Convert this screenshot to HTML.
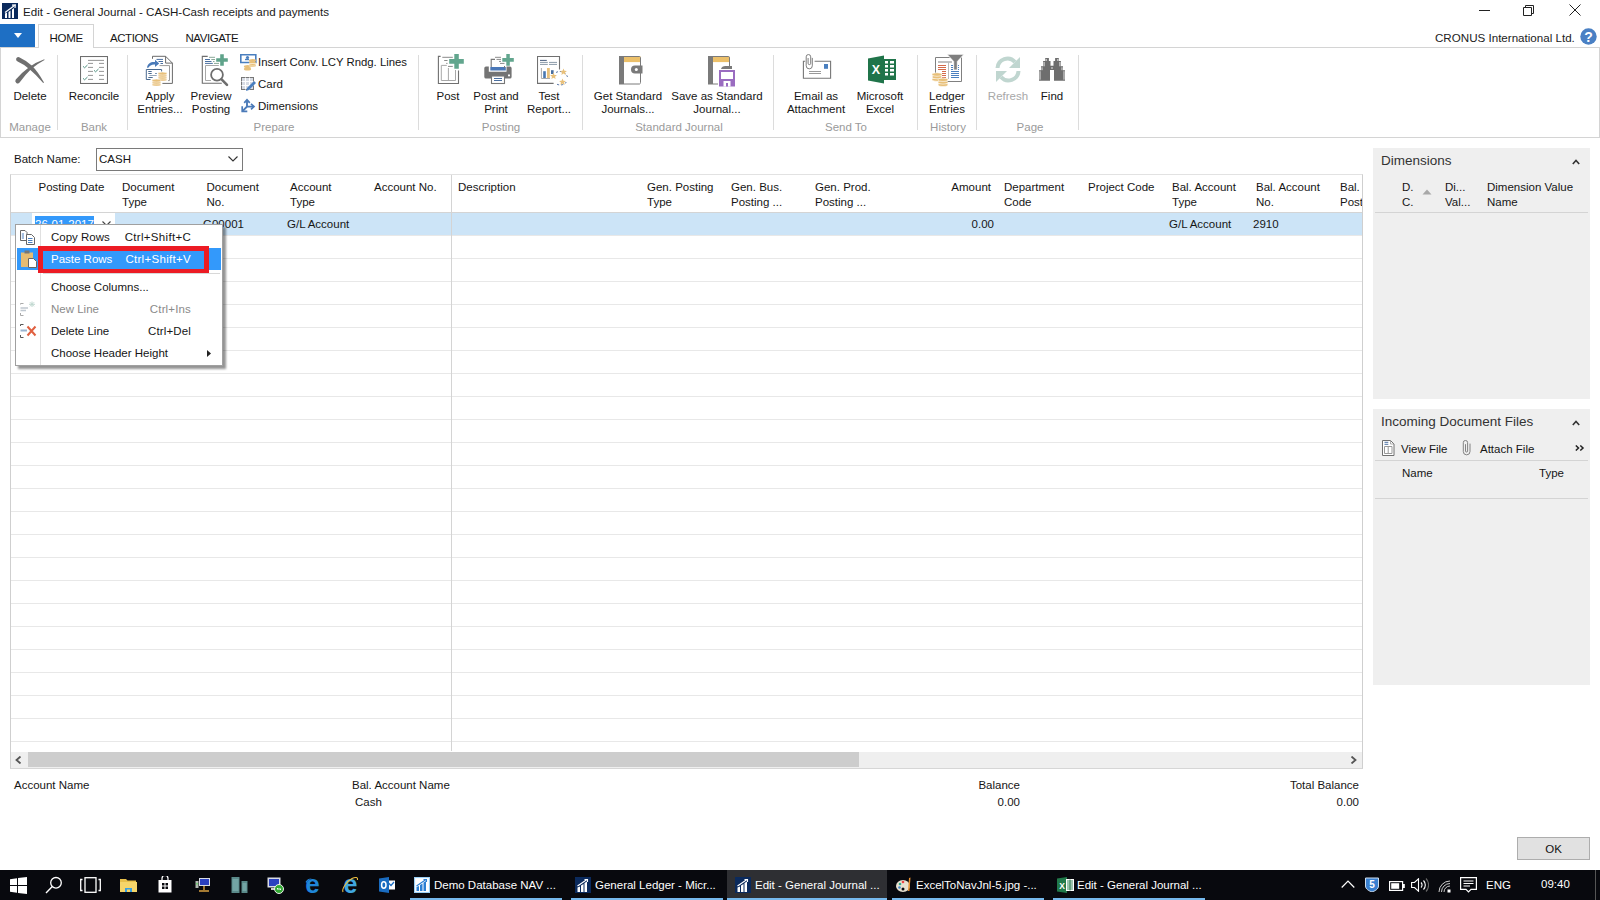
<!DOCTYPE html>
<html><head><meta charset="utf-8">
<style>
*{margin:0;padding:0;box-sizing:border-box}
html,body{width:1600px;height:900px;overflow:hidden;background:#fff}
body{position:relative;font-family:"Liberation Sans",sans-serif;font-size:11.5px;color:#161616}
.a{position:absolute}
.t{position:absolute;white-space:nowrap;line-height:14px;font-size:11.5px}
.c{transform:translateX(-50%);text-align:center}
.r{transform:translateX(-100%);text-align:right}
.g{color:#9a9a9a}
.sep{position:absolute;width:1px;background:#dcdcdc}
.hl{position:absolute;height:1px;background:#e8e8e8}
</style></head><body>

<!-- ===== Title bar ===== -->
<svg class="a" style="left:2px;top:3px" width="16" height="16" viewBox="0 0 16 16">
<rect width="16" height="16" fill="#0b2a5c"/>
<path d="M3 15V10.5L5 9.5V15ZM6.5 15V9L8.5 7.5V15ZM10 15V6.5L12 5V15Z" fill="#fff"/>
<path d="M3 9.5L12.5 2.5" stroke="#fff" stroke-width="1.2"/><path d="M10 2.2L13.3 2L13 5" stroke="#fff" stroke-width="1.2" fill="none"/>
</svg>
<div class="t" style="left:23px;top:5px;font-size:11.6px;color:#1a1a1a">Edit - General Journal - CASH-Cash receipts and payments</div>
<!-- window controls -->
<div class="a" style="left:1479px;top:10px;width:11px;height:1px;background:#222"></div>
<svg class="a" style="left:1523px;top:5px" width="11" height="11" viewBox="0 0 11 11"><path d="M0.5 2.5H8.5V10.5H0.5Z M2.5 2.5V0.5H10.5V8.5H8.5" fill="none" stroke="#222"/></svg>
<svg class="a" style="left:1569px;top:4px" width="12" height="12" viewBox="0 0 12 12"><path d="M0.5 0.5L11.5 11.5M11.5 0.5L0.5 11.5" stroke="#222" stroke-width="1"/></svg>

<!-- ===== Ribbon tabs ===== -->
<div class="a" style="left:0;top:24px;width:35px;height:23px;background:#1e6fc4"></div>
<svg class="a" style="left:14px;top:33px" width="8" height="5" viewBox="0 0 8 5"><path d="M0 0H8L4 5Z" fill="#fff"/></svg>
<div class="a" style="left:38px;top:24px;width:56px;height:24px;border:1px solid #d4d4d4;border-bottom:none;background:#fff;z-index:2"></div>
<div class="t" style="left:49.5px;top:31px;font-size:11.5px;z-index:3;letter-spacing:-0.25px">HOME</div>
<div class="t" style="left:110px;top:31px;font-size:11.5px;letter-spacing:-0.45px">ACTIONS</div>
<div class="t" style="left:185.5px;top:31px;font-size:11.5px;letter-spacing:-0.45px">NAVIGATE</div>
<div class="t" style="left:1435px;top:31px;font-size:11.6px;color:#222">CRONUS International Ltd.</div>
<svg class="a" style="left:1580px;top:28px" width="17" height="17" viewBox="0 0 17 17"><circle cx="8.5" cy="8.5" r="8.2" fill="#4a80c4"/><text x="8.5" y="13.5" font-family="Liberation Sans" font-weight="bold" font-size="14" fill="#fff" text-anchor="middle">?</text></svg>

<!-- ===== Ribbon body ===== -->
<div class="a" style="left:0;top:47px;width:1600px;height:91px;border-top:1px solid #d4d4d4;border-bottom:1px solid #d4d4d4;border-left:1px solid #d4d4d4;border-right:1px solid #d4d4d4"></div>

<div id="ribbon">
<!-- Delete -->
<svg class="a" style="left:14px;top:55px" width="32" height="30" viewBox="0 0 32 30">
<path d="M5.2 2.2Q12 5.3 18 10.8Q24 16.8 30 27.6L29.2 27.9Q22 19.6 15.5 14.2Q9.5 9.2 3.6 6.6A2.3 2.3 0 0 1 5.2 2.2Z" fill="#6f6f6f"/>
<path d="M1.8 24.6Q8 17.2 15 12.2Q22 7.2 30.3 4.3L30.5 5Q23 9 17.2 14Q11.2 19.8 5.6 27.4A2.3 2.3 0 0 1 1.8 24.6Z" fill="#6f6f6f"/>
</svg>
<div class="t c" style="left:30px;top:89px">Delete</div>
<div class="t c g" style="left:30px;top:120px">Manage</div>
<div class="sep" style="left:57px;top:55px;height:75px"></div>
<!-- Reconcile -->
<svg class="a" style="left:80px;top:56px" width="28" height="28" viewBox="0 0 28 28">
<rect x="0.5" y="0.5" width="27" height="27" fill="#fff" stroke="#6e6e6e" stroke-width="1.1"/>
<g stroke="#8a8a8a" stroke-width="0.9"><path d="M8 4.4H24M8 7.4H13M19 7.4H24M8 11.4H13M19 11.4H24M8 15.4H13M19 15.4H24M8 19.4H13M19 19.4H24M8 23.4H13M19 23.4H24"/></g>
<g stroke="#4f9080" stroke-width="1" fill="none"><path d="M3 10.3L4.6 11.8L7.5 9M3 22.3L4.6 23.8L7.5 21M14 14.3L15.6 15.8L18.5 13"/></g>
</svg>
<div class="t c" style="left:94px;top:89px">Reconcile</div>
<div class="t c g" style="left:94px;top:120px">Bank</div>
<div class="sep" style="left:127px;top:55px;height:75px"></div>
<!-- Apply Entries -->
<svg class="a" style="left:142px;top:52px" width="34" height="36" viewBox="0 0 34 36">
<path d="M10.5 6.8V4.3H23.6L30.4 11.1V31.4H20.4" fill="#fff" stroke="#6a6a6a"/>
<path d="M23.6 4.3V11.1H30.4" fill="none" stroke="#6a6a6a"/>
<path d="M14.5 7.4H21M16.5 9.5H21M18.5 11.5H21" stroke="#4a6fa0"/>
<path d="M17.5 13.6H27.5V28.6H26" fill="none" stroke="#9a9a9a"/>
<path d="M5 15.8C5.5 11.5 9 9.5 13 10V7.8L17.2 11.5L13 15V12.6C10 12.3 7.5 13.6 6.3 15.8Z" fill="#4a7ab8"/>
<path d="M19.6 19.5V17.5H4.3V27.5H8.5" fill="#fff" stroke="#4a6a90"/>
<path d="M6.3 19.5H9.7M6.3 21.5H9.7M13.3 21.5H14.7M6.3 25.5H10.7" stroke="#4a6a90"/><path d="M7.3 23.5H14.7" stroke="#9ab"/>
<g fill="#e8c07a" stroke="#fff" stroke-width="0.5"><ellipse cx="20.5" cy="27.8" rx="4.6" ry="1.3"/><ellipse cx="20.5" cy="25.8" rx="4.6" ry="1.3"/><ellipse cx="20.5" cy="23.8" rx="4.6" ry="1.3"/><ellipse cx="20.5" cy="21.6" rx="4.6" ry="1.5"/>
<ellipse cx="14.5" cy="32.8" rx="4.6" ry="1.3"/><ellipse cx="14.5" cy="30.8" rx="4.6" ry="1.3"/><ellipse cx="14.5" cy="28.6" rx="4.6" ry="1.5"/></g>
</svg>
<div class="t c" style="left:160px;top:89px">Apply</div>
<div class="t c" style="left:160px;top:102px">Entries...</div>
<!-- Preview Posting -->
<svg class="a" style="left:201px;top:53px" width="29" height="34" viewBox="0 0 29 34">
<path d="M6.7 3.4H1.3V30.3H20.8" fill="none" stroke="#6e6e6e" stroke-width="1.1"/>
<path d="M8 4.3H14M10.3 6.5H14M12 8.5H13.5M13 10.4H18" stroke="#8aa898"/>
<path d="M4 6.5H9M4 8.5H10.5M4 10.4H11.8" stroke="#4a6fa0"/>
<path d="M17.8 12.5H4.5V27.5H10" fill="none" stroke="#a8a8a8"/>
<path d="M19.2 1.2H22.8V5.2H26.8V8.8H22.8V12.8H19.2V8.8H15.2V5.2H19.2Z" fill="#5fa38a"/>
<circle cx="16" cy="21.7" r="5.9" fill="#fff" fill-opacity="0.6" stroke="#6e6e6e" stroke-width="1.8"/>
<path d="M20.6 26.3L26 31.8" stroke="#6e6e6e" stroke-width="2.6" stroke-linecap="round"/>
</svg>
<div class="t c" style="left:211px;top:89px">Preview</div>
<div class="t c" style="left:211px;top:102px">Posting</div>
<!-- small items -->
<svg class="a" style="left:240px;top:54px" width="17" height="17" viewBox="0 0 17 17">
<path d="M0.8 0.8H15.8V8.5H0.8Z" fill="#fff" stroke="#4a7fbf" stroke-width="1.6"/>
<circle cx="7.5" cy="3.5" r="1.6" fill="#4a7fbf"/><path d="M5 5.5H9" stroke="#4a7fbf" stroke-width="1.4"/>
<ellipse cx="12.5" cy="6.5" rx="3.6" ry="1.5" fill="#e8c07a"/><ellipse cx="12.5" cy="9" rx="3.6" ry="1.5" fill="#e8c07a"/><ellipse cx="12.5" cy="11.5" rx="3.6" ry="1.5" fill="#e8c07a"/>
<ellipse cx="7.5" cy="12.5" rx="3.6" ry="1.5" fill="#e8c07a"/><ellipse cx="7.5" cy="15" rx="3.6" ry="1.5" fill="#e8c07a"/>
<path d="M9 9.5H16M9 12H16" stroke="#fff" stroke-width="0.6"/>
</svg>
<div class="t" style="left:258px;top:55px;font-size:11.35px">Insert Conv. LCY Rndg. Lines</div>
<svg class="a" style="left:241px;top:77px" width="16" height="16" viewBox="0 0 16 16">
<rect x="0.5" y="0.5" width="12" height="12" fill="#d8dce4" stroke="#777"/>
<path d="M0.5 4.5H12.5M0.5 8.5H12.5M4.5 0.5V12.5M8.5 0.5V12.5" stroke="#fff"/>
<path d="M5 14L6 11L13 4L15 6L8 13Z" fill="#4a7fbf"/>
</svg>
<div class="t" style="left:258px;top:77px">Card</div>
<svg class="a" style="left:241px;top:98px" width="15" height="15" viewBox="0 0 15 15">
<path d="M6 8.6V2.2M6 8.6H12M6.6 8L2 12.6" stroke="#4a7ab8" stroke-width="1.9" fill="none"/>
<path d="M3.2 4.8L6 1.8L8.8 4.8M10 5.8L13 8.6L10 11.4M1.2 8.3V13.4H6.3" stroke="#4a7ab8" stroke-width="1.7" fill="none"/>
</svg>
<div class="t" style="left:258px;top:99px">Dimensions</div>
<div class="t c g" style="left:274px;top:120px">Prepare</div>
<div class="sep" style="left:418px;top:55px;height:75px"></div>
<!-- Post -->
<svg class="a" style="left:437px;top:54px" width="28" height="31" viewBox="0 0 28 31">
<path d="M3.6 2.4H1.4V29.5H21.5V16.5" fill="none" stroke="#707070" stroke-width="1.1"/>
<path d="M9.8 11.4H4.3V26.5H18.5V16M11.4 14V26.5" fill="none" stroke="#a8a8a8"/>
<path d="M5.3 3.3H15.8M7.2 6.5H10.5M9.2 9.4H10.5M11 12.4H15.8" stroke="#8a8a8a"/>
<path d="M17.3 0.1H21.8V5H26.8V9.8H21.8V14.8H17.3V9.8H12.2V5H17.3Z" fill="#62a68e"/>
</svg>
<div class="t c" style="left:448px;top:89px">Post</div>
<!-- Post and Print -->
<svg class="a" style="left:484px;top:54px" width="31" height="31" viewBox="0 0 31 31">
<path d="M2 12.4H4.8V17.8H22.5V12.4H26A1.8 1.8 0 0 1 27.6 14V23A1.6 1.6 0 0 1 26 24.5H2A1.7 1.7 0 0 1 0.3 23V14A1.7 1.7 0 0 1 2 12.4Z" fill="#747474"/>
<rect x="6.3" y="13" width="15.5" height="3.5" fill="#4a78b8"/>
<path d="M7.2 13V5.4H11" fill="none" stroke="#777" stroke-width="1.1"/>
<path d="M11 3.3H17M12.5 5.4H17M15 7.4H17M16 9.4H20.5" stroke="#8a8a8a"/>
<path d="M20.5 12V14" stroke="#777"/>
<rect x="7.5" y="22" width="13" height="7.5" fill="#fff" stroke="#777" stroke-width="1.1"/>
<path d="M10 24.5H18M10 26.5H18" stroke="#4a6fa0"/>
<rect x="24" y="20.5" width="2" height="1.8" fill="#fff"/>
<path d="M22.3 0.1H25.8V4.1H29.8V7.8H25.8V11.8H22.3V7.8H18.3V4.1H22.3Z" fill="#62a68e"/>
</svg>
<div class="t c" style="left:496px;top:89px">Post and</div>
<div class="t c" style="left:496px;top:102px">Print</div>
<!-- Test Report -->
<svg class="a" style="left:537px;top:56px" width="31" height="31" viewBox="0 0 31 31">
<path d="M22.5 13.5V0.5H0.5V27.4H16.6" fill="#fff" stroke="#707070" stroke-width="1.1"/>
<path d="M3 4.4H9.8" stroke="#4a6080"/>
<path d="M3 6.4H10.8M12 6.4H20M3 8.4H10.8M12 8.4H20" stroke="#8a9aa8"/>
<path d="M4.4 12V22.5H13" fill="none" stroke="#aaa"/>
<rect x="6.2" y="15.2" width="2.6" height="6.8" fill="#4a78b0"/><rect x="10" y="12" width="2.8" height="10" fill="#e8c07a"/><rect x="14" y="14.2" width="2.6" height="3.8" fill="#4a6fa0"/>
<path d="M19 16.5A8 8 0 0 1 30.5 21M29.5 26A8 8 0 0 1 19.5 28" fill="none" stroke="#5a78a8" stroke-dasharray="2.2 1.8"/>
<path d="M26.50 12.40L27.45 14.69L29.92 14.89L28.04 16.50L28.62 18.91L26.50 17.62L24.38 18.91L24.96 16.50L23.08 14.89L25.55 14.69Z" fill="#e8c07a"/><path d="M16.50 16.60L17.45 18.89L19.92 19.09L18.04 20.70L18.62 23.11L16.50 21.82L14.38 23.11L14.96 20.70L13.08 19.09L15.55 18.89Z" fill="#e8c07a"/><path d="M25.50 22.40L26.45 24.69L28.92 24.89L27.04 26.50L27.62 28.91L25.50 27.62L23.38 28.91L23.96 26.50L22.08 24.89L24.55 24.69Z" fill="#e8c07a"/>
</svg>
<div class="t c" style="left:549px;top:89px">Test</div>
<div class="t c" style="left:549px;top:102px">Report...</div>
<div class="t c g" style="left:501px;top:120px">Posting</div>
<div class="sep" style="left:582px;top:55px;height:75px"></div>
<!-- Get Standard Journals -->
<svg class="a" style="left:619px;top:56px" width="25" height="29" viewBox="0 0 25 29">
<path d="M0 0H20.5A1.5 1.5 0 0 1 22 1.5V27A1.5 1.5 0 0 1 20.5 28.5H0Z" fill="#fff"/>
<rect x="0" y="0" width="5" height="28.5" fill="#7a7a7a"/>
<rect x="5" y="0.3" width="16.5" height="5.8" fill="#ecc06a"/>
<path d="M5 28H20.5A1.5 1.5 0 0 0 21.5 26.5V1.5A1.5 1.5 0 0 0 20.5 0.5H5" fill="none" stroke="#7a7a7a"/>
<path d="M16 9.5H23.5V17.5H16A4 4 0 0 1 16 9.5Z" fill="#7a7a7a"/><circle cx="17.3" cy="13.5" r="1.5" fill="#fff"/>
</svg>
<div class="t c" style="left:628px;top:89px">Get Standard</div>
<div class="t c" style="left:628px;top:102px">Journals...</div>
<!-- Save as Standard Journal -->
<svg class="a" style="left:708px;top:56px" width="28" height="31" viewBox="0 0 28 31">
<path d="M0 0H20.5A1.5 1.5 0 0 1 22 1.5V27.5A1.5 1.5 0 0 1 20.5 28.5H0Z" fill="#fff"/>
<rect x="0" y="0" width="5" height="28.5" fill="#7a7a7a"/>
<rect x="5" y="0.3" width="16.5" height="5.8" fill="#ecc06a"/>
<path d="M5 28H10M5 0.5H20.5A1.5 1.5 0 0 1 21.5 2V10" fill="none" stroke="#7a7a7a"/>
<path d="M13 13C13.5 11 15 10 17.5 10H24V13Z" fill="#7a7a7a"/>
<path d="M11 14H27V30.5H11Z" fill="#9a6cc0"/>
<rect x="13" y="16" width="12" height="7" fill="#fff"/><rect x="15.5" y="25" width="7" height="5.5" fill="#fff"/><rect x="18" y="27" width="2" height="3.5" fill="#9a6cc0"/>
</svg>
<div class="t c" style="left:717px;top:89px">Save as Standard</div>
<div class="t c" style="left:717px;top:102px">Journal...</div>
<div class="t c g" style="left:679px;top:120px">Standard Journal</div>
<div class="sep" style="left:773px;top:55px;height:75px"></div>
<!-- Email as attachment -->
<svg class="a" style="left:802px;top:54px" width="30" height="26" viewBox="0 0 30 26">
<path d="M3.2 7.3H1.4V24.3H28.6V7.3H12.6" fill="#fff" stroke="#777" stroke-width="1.1"/>
<path d="M6.1 4V9.3A1.3 1.3 0 0 0 8.7 9.3V2.8A2.25 2.25 0 0 0 4.2 2.8V11.8A3.05 3.05 0 0 0 10.3 11.8V3.9" fill="none" stroke="#777" stroke-width="0.95"/>
<path d="M7 17.5H19M7 19.5H19" stroke="#999"/>
<rect x="22" y="10" width="4" height="4.8" fill="#4a7fbf"/>
</svg>
<div class="t c" style="left:816px;top:89px">Email as</div>
<div class="t c" style="left:816px;top:102px">Attachment</div>
<!-- Excel -->
<svg class="a" style="left:868px;top:55px" width="29" height="29" viewBox="0 0 29 29">
<path d="M0 3.5L16 0.5V28.5L0 25.5Z" fill="#20744a"/>
<rect x="15" y="4" width="13" height="21" fill="#20744a"/>
<g fill="#fff"><rect x="17" y="6" width="3" height="2.5"/><rect x="22" y="6" width="4" height="2.5"/><rect x="17" y="10" width="3" height="2.5"/><rect x="22" y="10" width="4" height="2.5"/><rect x="17" y="14" width="3" height="2.5"/><rect x="22" y="14" width="4" height="2.5"/><rect x="17" y="18" width="3" height="2.5"/><rect x="22" y="18" width="4" height="2.5"/></g>
<text x="7.8" y="19.3" font-family="Liberation Sans" font-weight="bold" font-size="12.5" fill="#fff" text-anchor="middle">X</text>
</svg>
<div class="t c" style="left:880px;top:89px">Microsoft</div>
<div class="t c" style="left:880px;top:102px">Excel</div>
<div class="t c g" style="left:846px;top:120px">Send To</div>
<div class="sep" style="left:917px;top:55px;height:75px"></div>
<!-- Ledger entries -->
<svg class="a" style="left:931px;top:54px" width="34" height="33" viewBox="0 0 34 33">
<path d="M4.5 3.5H30.5V27.5H16" fill="#fff" stroke="#808080"/><path d="M4.5 3.5V19" stroke="#808080"/>
<path d="M7 8H21" stroke="#a8a8a8" stroke-width="1.4"/><path d="M17.5 8V25" stroke="#bbb"/>
<path d="M7 11.5H15M7 13.5H15M7 15.5H15M11 17.5H15M11 19.5H15M11 21.5H15M11 23.5H15" stroke="#d46a4a"/>
<path d="M20 17.5H28M20 19.5H28M20 21.5H28M20 23.5H28M20 11.5H22M27 11.5H28M20 13.5H22M27 13.5H28M20 15.5H22M27 15.5H28" stroke="#4a7fbf"/>
<path d="M16 0.3H33L26.3 7.5V16H22.7V7.5Z" fill="#7f7f7f" stroke="#fff" stroke-width="0.8"/>
<g fill="#e8c07a" stroke="#fff" stroke-width="0.6"><ellipse cx="6" cy="25.5" rx="5" ry="1.8"/><ellipse cx="6" cy="23" rx="5" ry="1.8"/><ellipse cx="6" cy="20.5" rx="5" ry="1.8"/>
<ellipse cx="12" cy="30.8" rx="5" ry="1.8"/><ellipse cx="12" cy="28.3" rx="5" ry="1.8"/><ellipse cx="12" cy="25.8" rx="5" ry="1.8"/></g>
</svg>
<div class="t c" style="left:947px;top:89px">Ledger</div>
<div class="t c" style="left:947px;top:102px">Entries</div>
<div class="t c g" style="left:948px;top:120px">History</div>
<div class="sep" style="left:976px;top:55px;height:75px"></div>
<!-- Refresh -->
<svg class="a" style="left:994px;top:56px" width="28" height="27" viewBox="0 0 28 27">
<path d="M3.5 12A10 10 0 0 1 21 6" fill="none" stroke="#c0d6d0" stroke-width="4"/>
<path d="M26 1V12H15Z" fill="#c0d6d0"/>
<path d="M24.5 15A10 10 0 0 1 7 21" fill="none" stroke="#c0d6d0" stroke-width="4"/>
<path d="M2 26V15H13Z" fill="#c0d6d0"/>
</svg>
<div class="t c g" style="left:1008px;top:89px;color:#a8a8a8">Refresh</div>
<!-- Find -->
<svg class="a" style="left:1039px;top:58px" width="27" height="23" viewBox="0 0 27 23">
<path d="M0 12.2H2V8.3H4.1V3H6.2V0H9.9V3H11.5V7.7H14.5V3H16.1V0H19.8V3H21.9V8.3H24V12.2H26V22.7H15V12H11V22.7H0Z" fill="#6e6e6e"/>
<path d="M1 13.2V21.7M3 9.3V12.2M5.1 4V8.3M7.2 1V3M25 13.2V21.7M23 9.3V12.2M20.9 4V8.3M18.8 1V3M12 10H14" stroke="#fff" stroke-width="0.8"/>
</svg>
<div class="t c" style="left:1052px;top:89px">Find</div>
<div class="t c g" style="left:1030px;top:120px">Page</div>
<div class="sep" style="left:1078px;top:55px;height:75px"></div>
</div>

<!-- ===== Batch name ===== -->
<div class="t" style="left:14px;top:152px">Batch Name:</div>
<div class="a" style="left:96px;top:148px;width:147px;height:23px;border:1px solid #7a7a7a;background:#fff"></div>
<div class="t" style="left:99px;top:152px">CASH</div>
<svg class="a" style="left:228px;top:156px" width="10" height="6" viewBox="0 0 10 6"><path d="M0.5 0.5L5 5L9.5 0.5" fill="none" stroke="#333" stroke-width="1.1"/></svg>

<div id="grid">
<!-- grid frame -->
<div class="a" style="left:10px;top:174px;width:1353px;height:595px;border:1px solid #cfcfcf;border-top-color:#e2e2e2;border-bottom-color:#d6d6d6"></div>
<div class="a" style="left:11px;top:212px;width:1351px;height:1px;background:#d4d4d4"></div>
<div class="a" style="left:11px;top:213px;width:1351px;height:22px;background:#cce4f7"></div>
<div class="hl" style="left:11px;top:235px;width:1351px"></div>
<div class="hl" style="left:11px;top:258px;width:1351px"></div>
<div class="hl" style="left:11px;top:281px;width:1351px"></div>
<div class="hl" style="left:11px;top:304px;width:1351px"></div>
<div class="hl" style="left:11px;top:327px;width:1351px"></div>
<div class="hl" style="left:11px;top:350px;width:1351px"></div>
<div class="hl" style="left:11px;top:373px;width:1351px"></div>
<div class="hl" style="left:11px;top:396px;width:1351px"></div>
<div class="hl" style="left:11px;top:419px;width:1351px"></div>
<div class="hl" style="left:11px;top:442px;width:1351px"></div>
<div class="hl" style="left:11px;top:465px;width:1351px"></div>
<div class="hl" style="left:11px;top:488px;width:1351px"></div>
<div class="hl" style="left:11px;top:511px;width:1351px"></div>
<div class="hl" style="left:11px;top:534px;width:1351px"></div>
<div class="hl" style="left:11px;top:557px;width:1351px"></div>
<div class="hl" style="left:11px;top:580px;width:1351px"></div>
<div class="hl" style="left:11px;top:603px;width:1351px"></div>
<div class="hl" style="left:11px;top:626px;width:1351px"></div>
<div class="hl" style="left:11px;top:649px;width:1351px"></div>
<div class="hl" style="left:11px;top:672px;width:1351px"></div>
<div class="hl" style="left:11px;top:695px;width:1351px"></div>
<div class="hl" style="left:11px;top:718px;width:1351px"></div>
<div class="hl" style="left:11px;top:741px;width:1351px"></div>

<div class="a" style="left:451px;top:175px;width:1px;height:576px;background:#d4d4d4"></div>
<!-- header -->
<div class="a" style="left:11px;top:175px;width:1351px;height:37px;overflow:hidden">
<div class="t" style="left:27.5px;top:5px;line-height:15px">Posting Date</div>
<div class="t" style="left:111px;top:5px;line-height:15px">Document<br>Type</div>
<div class="t" style="left:195.5px;top:5px;line-height:15px">Document<br>No.</div>
<div class="t" style="left:279px;top:5px;line-height:15px">Account<br>Type</div>
<div class="t" style="left:363px;top:5px;line-height:15px">Account No.</div>
<div class="t" style="left:447px;top:5px;line-height:15px">Description</div>
<div class="t" style="left:636px;top:5px;line-height:15px">Gen. Posting<br>Type</div>
<div class="t" style="left:720px;top:5px;line-height:15px">Gen. Bus.<br>Posting ...</div>
<div class="t" style="left:804px;top:5px;line-height:15px">Gen. Prod.<br>Posting ...</div>
<div class="t r" style="left:980px;top:5px;line-height:15px">Amount</div>
<div class="t" style="left:993px;top:5px;line-height:15px">Department<br>Code</div>
<div class="t" style="left:1077px;top:5px;line-height:15px">Project Code</div>
<div class="t" style="left:1161px;top:5px;line-height:15px">Bal. Account<br>Type</div>
<div class="t" style="left:1245px;top:5px;line-height:15px">Bal. Account<br>No.</div>
<div class="t" style="left:1329px;top:5px;line-height:15px">Bal.<br>Posting</div>
</div>
<!-- row 1 -->
<div class="a" style="left:32px;top:213px;width:83px;height:22px;background:#fff"></div>
<div class="a" style="left:35px;top:216px;width:59px;height:17px;background:#3399fb"></div>
<div class="t" style="left:35px;top:217px;color:#fff">26-01-2017</div>
<svg class="a" style="left:102px;top:221px" width="9" height="5" viewBox="0 0 9 5"><path d="M0.5 0.5L4.5 4.5L8.5 0.5" fill="none" stroke="#444" stroke-width="1.1"/></svg>
<div class="t" style="left:203px;top:217px">G00001</div>
<div class="t" style="left:287px;top:217px">G/L Account</div>
<div class="t r" style="left:994px;top:217px">0.00</div>
<div class="t" style="left:1169px;top:217px">G/L Account</div>
<div class="t" style="left:1253px;top:217px">2910</div>
<!-- scrollbar -->
<div class="a" style="left:11px;top:752px;width:1351px;height:16px;background:#efefef"></div>
<div class="a" style="left:28px;top:752px;width:831px;height:15px;background:#cdcdcd"></div>
<svg class="a" style="left:15px;top:756px" width="7" height="8" viewBox="0 0 7 8"><path d="M5.5 0.5L1.5 4L5.5 7.5" fill="none" stroke="#555" stroke-width="1.8"/></svg>
<svg class="a" style="left:1350px;top:756px" width="7" height="8" viewBox="0 0 7 8"><path d="M1.5 0.5L5.5 4L1.5 7.5" fill="none" stroke="#555" stroke-width="1.8"/></svg>
</div>
<div id="factbox">
<div class="a" style="left:1373px;top:148px;width:217px;height:251px;background:#efefef"></div>
<div class="t" style="left:1381px;top:154px;font-size:13.5px;color:#333">Dimensions</div>
<svg class="a" style="left:1572px;top:159px" width="8" height="6" viewBox="0 0 8 6"><path d="M0.8 5L4 1.5L7.2 5" fill="none" stroke="#333" stroke-width="1.6"/></svg>
<div class="t" style="left:1402px;top:180px;line-height:15px">D.<br>C.</div>
<svg class="a" style="left:1422px;top:189px" width="10" height="6" viewBox="0 0 10 6"><path d="M0.5 5.5L5 0.5L9.5 5.5Z" fill="#a8a8a8"/></svg>
<div class="t" style="left:1445px;top:180px;line-height:15px">Di...<br>Val...</div>
<div class="t" style="left:1487px;top:180px;line-height:15px">Dimension Value<br>Name</div>
<div class="a" style="left:1375px;top:212px;width:213px;height:1px;background:#d4d4d4"></div>

<div class="a" style="left:1373px;top:409px;width:217px;height:276px;background:#efefef"></div>
<div class="t" style="left:1381px;top:415px;font-size:13.5px;color:#333">Incoming Document Files</div>
<svg class="a" style="left:1572px;top:420px" width="8" height="6" viewBox="0 0 8 6"><path d="M0.8 5L4 1.5L7.2 5" fill="none" stroke="#333" stroke-width="1.6"/></svg>
<svg class="a" style="left:1382px;top:440px" width="13" height="16" viewBox="0 0 13 16"><path d="M0.5 0.5H8.5L12 4V15.5H0.5Z" fill="#fff" stroke="#707070"/><path d="M8.5 0.5V4H12" fill="none" stroke="#999" stroke-width="0.8"/><path d="M2.5 2.3H6.3M2.5 4.3H6.3" stroke="#4a6fa0"/><path d="M2.5 6.5H10V13.5H2.5ZM6.2 6.5V13.5" fill="none" stroke="#999"/></svg>
<div class="t" style="left:1401px;top:442px">View File</div>
<svg class="a" style="left:1462px;top:440px" width="9" height="16" viewBox="0 0 9 16"><path d="M3.5 4.2V11A1.05 1.05 0 0 0 5.6 11V2.6A2.15 2.15 0 0 0 1.3 2.6V11.5A3.35 3.35 0 0 0 8 11.5V3.6" fill="none" stroke="#777" stroke-width="0.9"/></svg>
<div class="t" style="left:1480px;top:442px">Attach File</div>
<svg class="a" style="left:1575px;top:445px" width="10" height="6" viewBox="0 0 10 6"><path d="M0.8 0.5L3.5 3L0.8 5.5M5.3 0.5L8 3L5.3 5.5" fill="none" stroke="#222" stroke-width="1.5"/></svg>
<div class="a" style="left:1375px;top:460px;width:213px;height:1px;background:#d4d4d4"></div>
<div class="t" style="left:1402px;top:466px">Name</div>
<div class="t" style="left:1539px;top:466px">Type</div>
<div class="a" style="left:1375px;top:498px;width:213px;height:1px;background:#d4d4d4"></div>
</div>
<div id="footer">
<div class="t" style="left:14px;top:778px">Account Name</div>
<div class="t" style="left:352px;top:778px">Bal. Account Name</div>
<div class="t" style="left:355px;top:795px">Cash</div>
<div class="t r" style="left:1020px;top:778px">Balance</div>
<div class="t r" style="left:1020px;top:795px">0.00</div>
<div class="t r" style="left:1359px;top:778px">Total Balance</div>
<div class="t r" style="left:1359px;top:795px">0.00</div>
<div class="a" style="left:1517px;top:837px;width:73px;height:23px;background:#e1e1e1;border:1px solid #adadad"></div>
<div class="t c" style="left:1553.5px;top:842px;color:#111">OK</div>
</div>
<div id="menu">
<div class="a" style="left:18px;top:227px;width:208px;height:142px;background:rgba(0,0,0,0.42);filter:blur(1px)"></div>
<div class="a" style="left:15px;top:224px;width:208px;height:142px;background:#fff;border:1px solid #a0a0a0"></div>
<div class="a" style="left:40px;top:225px;width:1px;height:140px;background:#e0e0e0"></div>
<!-- highlight -->
<div class="a" style="left:17px;top:248px;width:204px;height:22px;background:#3399fb"></div>
<div class="a" style="left:40px;top:248px;width:1px;height:22px;background:#3399fb"></div>
<div class="a" style="left:38px;top:246px;width:171px;height:27px;border:5px solid #ec1b24;border-bottom-width:4px"></div>
<div class="a" style="left:43px;top:273px;width:177px;height:1px;background:#d8d8d8"></div>
<!-- copy icon -->
<svg class="a" style="left:20px;top:230px" width="16" height="15" viewBox="0 0 16 15"><path d="M0.5 0.5H5L7 2.5V10.5H0.5Z" fill="#fff" stroke="#666"/><path d="M1.8 4H4M1.8 6H4M1.8 8H4" stroke="#4a7fbf"/><path d="M6.5 4.5H11.5L14.5 7.5V14.5H6.5Z" fill="#fff" stroke="#666"/><path d="M8 8.5H12.5M8 10.5H12.5M8 12.5H12.5" stroke="#4a7fbf"/></svg>
<!-- paste icon -->
<svg class="a" style="left:21px;top:250px" width="16" height="18" viewBox="0 0 16 18"><rect x="0" y="2.5" width="12" height="14.5" fill="#e6bc72"/><rect x="3.5" y="0.5" width="5" height="3" fill="#777"/><path d="M7.5 8.5H12.5L15.5 11.5V17.5H7.5Z" fill="#fff" stroke="#666"/></svg>
<!-- new line icon -->
<svg class="a" style="left:20px;top:301px" width="16" height="15" viewBox="0 0 16 15"><path d="M3.5 2.5H0.5V3.5M0.5 12V14.5H3.5" fill="none" stroke="#aaa"/><path d="M0.5 7H8M0.5 9.5H6" stroke="#c0c8d0" stroke-width="1.5"/><path d="M12 0.5V6M9 3.3H15M10 1.3L14 5.3M14 1.3L10 5.3" stroke="#c0d8d0"/></svg>
<!-- delete line icon -->
<svg class="a" style="left:20px;top:324px" width="17" height="14" viewBox="0 0 17 14"><path d="M3.5 0.5H0.5V2M0.5 11V13.5H3.5" fill="none" stroke="#555"/><path d="M0.5 6.5H7" stroke="#9ab4d0" stroke-width="2"/><path d="M7.5 2.5L15.5 11.5M15.5 2.5L7.5 11.5" stroke="#e06040" stroke-width="2"/></svg>
<div class="t" style="left:51px;top:230px">Copy Rows</div>
<div class="t r" style="left:191px;top:230px;letter-spacing:0.3px">Ctrl+Shift+C</div>
<div class="t" style="left:51px;top:252px;color:#fff">Paste Rows</div>
<div class="t r" style="left:191px;top:252px;color:#fff;letter-spacing:0.3px">Ctrl+Shift+V</div>
<div class="t" style="left:51px;top:280px">Choose Columns...</div>
<div class="t" style="left:51px;top:302px;color:#8a8a8a">New Line</div>
<div class="t r" style="left:191px;top:302px;color:#8a8a8a;letter-spacing:0.15px">Ctrl+Ins</div>
<div class="t" style="left:51px;top:324px">Delete Line</div>
<div class="t r" style="left:191px;top:324px;letter-spacing:0.15px">Ctrl+Del</div>
<div class="t" style="left:51px;top:346px">Choose Header Height</div>
<svg class="a" style="left:207px;top:350px" width="4" height="7" viewBox="0 0 4 7"><path d="M0 0L4 3.5L0 7Z" fill="#222"/></svg>
</div>
<div id="taskbar">
<div class="a" style="left:0;top:870px;width:1600px;height:30px;background:#08090e"></div>
<!-- start -->
<svg class="a" style="left:10px;top:877px" width="17" height="17" viewBox="0 0 17 17"><path d="M0 2.3L7 1.3V8H0ZM8 1.1L17 0V8H8ZM0 9H7V15.7L0 14.7ZM8 9H17V17L8 15.9Z" fill="#fff"/></svg>
<!-- search -->
<svg class="a" style="left:45px;top:876px" width="18" height="18" viewBox="0 0 18 18"><circle cx="11" cy="6.8" r="5.3" fill="none" stroke="#fff" stroke-width="1.3"/><path d="M7.3 10.5L1 17" stroke="#fff" stroke-width="1.4"/></svg>
<!-- task view -->
<svg class="a" style="left:80px;top:877px" width="21" height="16" viewBox="0 0 21 16"><rect x="5" y="0.7" width="11" height="14.6" fill="none" stroke="#fff" stroke-width="1.3"/><path d="M2.5 2.5H0.7V13.5H2.5M18.5 2.5H20.3V13.5H18.5" fill="none" stroke="#fff" stroke-width="1.3"/></svg>
<!-- explorer -->
<svg class="a" style="left:120px;top:878px" width="17" height="15" viewBox="0 0 17 15"><path d="M0 1H6L7.5 2.5H16V14H0Z" fill="#e8c04a"/><path d="M0 4H17V14H0Z" fill="#f5d56a"/><path d="M5 14V10H12V14H10V11.5H7V14Z" fill="#3aa0e0"/></svg>
<!-- store -->
<svg class="a" style="left:158px;top:876px" width="14" height="17" viewBox="0 0 14 17"><path d="M4 4V2.5A3 3 0 0 1 10 2.5V4" fill="none" stroke="#fff" stroke-width="1.2"/><path d="M0.5 4H13.5V16.5H0.5Z" fill="#fff"/><path d="M4 7H6.5V9.5H4ZM7.5 7H10V9.5H7.5ZM4 10.5H6.5V13H4ZM7.5 10.5H10V13H7.5Z" fill="#08090e"/></svg>
<!-- computer network -->
<svg class="a" style="left:195px;top:877px" width="16" height="16" viewBox="0 0 16 16"><rect x="0.5" y="4" width="3" height="7" fill="#b0b8b0"/><rect x="1" y="6" width="2" height="1.5" fill="#7c7"/><rect x="4" y="1" width="11" height="8" fill="#d8dce4"/><rect x="5" y="2" width="9" height="6" fill="#2a40c0"/><path d="M9 9V13M4 14H14" stroke="#d8a040" stroke-width="1.4"/></svg>
<!-- servers -->
<svg class="a" style="left:231px;top:877px" width="17" height="16" viewBox="0 0 17 16"><rect x="0.5" y="0" width="8" height="16" fill="#5a8a8a"/><path d="M1.5 3H7.5M1.5 5H7.5M1.5 7H7.5M1.5 9H7.5M1.5 11H7.5M1.5 13H7.5" stroke="#9cc" stroke-width="0.8"/><rect x="10.5" y="4" width="6" height="12" fill="#5a8a8a"/><path d="M11.5 7H15.5M11.5 9H15.5M11.5 11H15.5M11.5 13H15.5" stroke="#9cc" stroke-width="0.8"/></svg>
<!-- rdp -->
<svg class="a" style="left:267px;top:877px" width="17" height="17" viewBox="0 0 17 17"><rect x="0.5" y="0.5" width="13" height="10" fill="#d8dce4"/><rect x="2" y="2" width="10" height="7" fill="#2a40c0"/><rect x="4" y="11" width="6" height="2" fill="#ccc"/><circle cx="12" cy="12" r="4.5" fill="#3a3" stroke="#eee"/><path d="M10 12H14M10 12L11 11M14 12L13 13" stroke="#fff" stroke-width="0.9"/></svg>
<!-- edge -->
<svg class="a" style="left:304px;top:876px" width="17" height="18" viewBox="0 0 17 18"><text x="8.5" y="16.5" font-family="Liberation Sans" font-weight="bold" font-size="26" fill="#1f86d8" text-anchor="middle">e</text><path d="M1.5 6C3 3 6 2 8 2.5C5.5 3 3.5 4.5 2.5 7Z" fill="#1f86d8"/></svg>
<!-- ie -->
<svg class="a" style="left:341px;top:876px" width="18" height="18" viewBox="0 0 18 18"><text x="9.5" y="16.5" font-family="Liberation Sans" font-weight="bold" font-size="25" fill="#40a8e0" text-anchor="middle">e</text><path d="M2 16C0.5 13 6 5 11 2.5C15 0.5 17 1.5 16.5 4" fill="none" stroke="#f0c040" stroke-width="1.1"/></svg>
<!-- outlook -->
<svg class="a" style="left:379px;top:877px" width="16" height="16" viewBox="0 0 16 16"><rect x="8" y="3.5" width="8" height="9" fill="#fff"/><path d="M9.5 6L12 8.5L15 5" fill="none" stroke="#1e6fc4" stroke-width="1.3"/><path d="M0 1.5L10 0V16L0 14.5Z" fill="#1a6cc0"/><ellipse cx="4.8" cy="8" rx="2.2" ry="3.2" fill="none" stroke="#fff" stroke-width="1.5"/></svg>

<!-- task items -->
<div class="a" style="left:727px;top:870px;width:160px;height:30px;background:#2e2f33"></div>
<div class="a" style="left:410px;top:898px;width:152px;height:2px;background:#76b9ed"></div>
<div class="a" style="left:571px;top:898px;width:152px;height:2px;background:#76b9ed"></div>
<div class="a" style="left:727px;top:898px;width:160px;height:2px;background:#76b9ed"></div>
<div class="a" style="left:892px;top:898px;width:152px;height:2px;background:#76b9ed"></div>
<div class="a" style="left:1053px;top:898px;width:152px;height:2px;background:#76b9ed"></div>

<svg class="a" style="left:414px;top:877px" width="16" height="16" viewBox="0 0 16 16"><rect x="0.5" y="0.5" width="15" height="15" fill="#e8f4ff" stroke="#9cd0f5"/><rect x="1.5" y="1.5" width="13" height="13" fill="#fff"/><path d="M2.5 14V10L5 9V14ZM6 14V8L8.5 6.5V14ZM9.5 14V5.5L12 4V14Z" fill="#2a7fd4"/><path d="M2.5 9L12 2.5M9.5 2.5H12.5V5" stroke="#2a7fd4" stroke-width="1.1" fill="none"/></svg>
<div class="t" style="left:434px;top:878px;color:#fff;font-size:11.5px">Demo Database NAV ...</div>
<svg class="a" style="left:575px;top:877px" width="16" height="16" viewBox="0 0 16 16"><rect width="16" height="16" fill="#0b2a5c"/><path d="M2.5 15V10.5L5 9.5V15ZM6 15V8.5L8.5 7V15ZM9.5 15V6L12 4.5V15Z" fill="#fff"/><path d="M2.5 9L12 2.5M9.5 2.5H12.5V5" stroke="#fff" stroke-width="1.1" fill="none"/></svg>
<div class="t" style="left:595px;top:878px;color:#fff;font-size:11.5px">General Ledger - Micr...</div>
<svg class="a" style="left:735px;top:877px" width="16" height="16" viewBox="0 0 16 16"><rect width="16" height="16" fill="#0b2a5c"/><path d="M2.5 15V10.5L5 9.5V15ZM6 15V8.5L8.5 7V15ZM9.5 15V6L12 4.5V15Z" fill="#fff"/><path d="M2.5 9L12 2.5M9.5 2.5H12.5V5" stroke="#fff" stroke-width="1.1" fill="none"/></svg>
<div class="t" style="left:755px;top:878px;color:#fff;font-size:11.5px">Edit - General Journal ...</div>
<svg class="a" style="left:896px;top:877px" width="17" height="16" viewBox="0 0 17 16"><ellipse cx="7" cy="9" rx="7" ry="6" fill="#e8e0d0"/><circle cx="4" cy="7" r="1.3" fill="#3a8"/><circle cx="7" cy="5" r="1.3" fill="#e44"/><circle cx="3.5" cy="10.5" r="1.3" fill="#48c"/><circle cx="7" cy="12" r="1.5" fill="#08090e"/><path d="M13 1L14.5 0.5L13.5 14H12Z" fill="#e89030"/></svg>
<div class="t" style="left:916px;top:878px;color:#fff;font-size:11.5px">ExcelToNavJnl-5.jpg -...</div>
<svg class="a" style="left:1057px;top:877px" width="17" height="16" viewBox="0 0 17 16"><path d="M0 1.5L10 0V16L0 14.5Z" fill="#21794a"/><rect x="9" y="2" width="8" height="12" fill="#fff"/><path d="M10 4H16M10 6H16M10 8H16M10 10H16M10 12H16M13 2.5V13.5" stroke="#21794a" stroke-width="0.9"/><text x="5" y="11.5" font-family="Liberation Sans" font-weight="bold" font-size="8.5" fill="#fff" text-anchor="middle">X</text></svg>
<div class="t" style="left:1077px;top:878px;color:#fff;font-size:11.5px">Edit - General Journal ...</div>

<!-- tray -->
<svg class="a" style="left:1341px;top:880px" width="14" height="8" viewBox="0 0 14 8"><path d="M0.7 7.5L7 1L13.3 7.5" fill="none" stroke="#fff" stroke-width="1.2"/></svg>
<svg class="a" style="left:1365px;top:877px" width="14" height="15" viewBox="0 0 14 15"><path d="M0.5 1H13.5V9C13.5 12 10 14 7 15C4 14 0.5 12 0.5 9Z" fill="#3a80d0" stroke="#cde"/><text x="7" y="11" font-family="Liberation Sans" font-weight="bold" font-size="10" fill="#fff" text-anchor="middle">5</text></svg>
<svg class="a" style="left:1389px;top:881px" width="16" height="10" viewBox="0 0 16 10"><rect x="0.6" y="0.6" width="13" height="8.8" fill="none" stroke="#fff" stroke-width="1.2"/><rect x="2.2" y="2.2" width="8" height="5.6" fill="#fff"/><rect x="14" y="3" width="1.8" height="4" fill="#fff"/></svg>
<svg class="a" style="left:1411px;top:878px" width="18" height="14" viewBox="0 0 18 14"><path d="M0.6 4.5H3.5L7.5 0.8V13.2L3.5 9.5H0.6Z" fill="none" stroke="#fff" stroke-width="1.1"/><path d="M10 4.5A3.5 3.5 0 0 1 10 9.5M12.5 2.5A6.5 6.5 0 0 1 12.5 11.5" fill="none" stroke="#fff" stroke-width="1.1"/><path d="M15 0.5A9.5 9.5 0 0 1 15 13.5" fill="none" stroke="#666" stroke-width="1.1"/></svg>
<svg class="a" style="left:1438px;top:880px" width="14" height="13" viewBox="0 0 14 13"><path d="M1 12A11 11 0 0 1 12 1M3.5 12A8.5 8.5 0 0 1 12 3.5M6 12A6 6 0 0 1 12 6" fill="none" stroke="#ccc" stroke-width="1"/><rect x="9.5" y="9.5" width="3" height="3" fill="#fff"/></svg>
<svg class="a" style="left:1460px;top:877px" width="17" height="16" viewBox="0 0 17 16"><path d="M0.6 0.6H16.4V12.4H11L8.5 15L6 12.4H0.6Z" fill="none" stroke="#fff" stroke-width="1.2"/><path d="M3.5 4H13.5M3.5 6.5H13.5M3.5 9H10" stroke="#fff" stroke-width="1.1"/></svg>
<div class="t" style="left:1486px;top:878px;color:#fff;font-size:11.5px">ENG</div>
<div class="t" style="left:1541px;top:877px;color:#fff;font-size:11.5px">09:40</div>
<div class="a" style="left:1595px;top:870px;width:1px;height:30px;background:#555"></div>
</div>

</body></html>
